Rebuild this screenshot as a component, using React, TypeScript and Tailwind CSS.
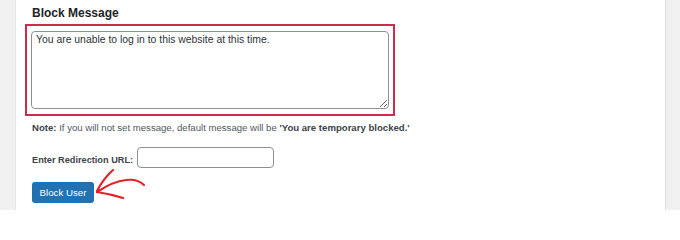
import React from "react";

export default function App() {
  return (
    <div className="relative flex w-[680px] h-[210px] overflow-hidden bg-[#f0f0f1] font-['Liberation_Sans',Arial,sans-serif]">
      <div className="w-4 shrink-0 border-r border-[#e6e6e8]" />
      <div className="w-[650px] shrink-0 bg-white border-r border-[#dcdcde] pl-4 pt-1">
        <h2 className="text-[12px] leading-[18px] font-bold text-[#1d2327]">Block Message</h2>
        <div className="mt-[2px] -ml-[7px] w-[370px] border-2 border-[#c92c4d] px-[4px] py-[5px]">
          <textarea
            className="block w-[358px] h-[78px] border border-[#8c8f94] rounded-[4px] px-[4px] pt-[1px] text-[10.4px] leading-[14px] text-[#2c3338] outline-none"
            defaultValue="You are unable to log in to this website at this time."
          />
        </div>
        <p className="mt-[5px] text-[9.6px] leading-[14px] text-[#50575e]">
          <span className="font-bold text-[#3c434a]">Note:</span> If you will not set message, default message will be{" "}
          <span className="font-bold text-[#3c434a]">'You are temporary blocked.'</span>
        </p>
        <div className="mt-[12px] flex items-center gap-[4px]">
          <label className="pt-[4px] text-[9.2px] leading-[14px] font-bold text-[#3c434a]">Enter Redirection URL:</label>
          <input type="text" className="w-[137px] h-[21px] border border-[#8c8f94] rounded-[4px] outline-none" />
        </div>
        <button className="mt-[14px] block w-[62px] h-[21px] rounded-[3px] bg-[#2271b1] text-white text-[9.7px] leading-[21px]">
          Block User
        </button>
      </div>
      <div className="flex-1" />
      <svg className="absolute inset-0 pointer-events-none" width="680" height="210" viewBox="0 0 680 210">
        <g fill="none" stroke="#e5202a" strokeWidth="2.2" strokeLinecap="round" strokeLinejoin="round">
          <path d="M97 192 C 106 186, 116 181, 126 180 C 134 179, 140 181, 144 185" />
          <path d="M97 191 Q 103 179 113 170" />
          <path d="M97 192 Q 110 194 123 198" />
        </g>
      </svg>
    </div>
  );
}
